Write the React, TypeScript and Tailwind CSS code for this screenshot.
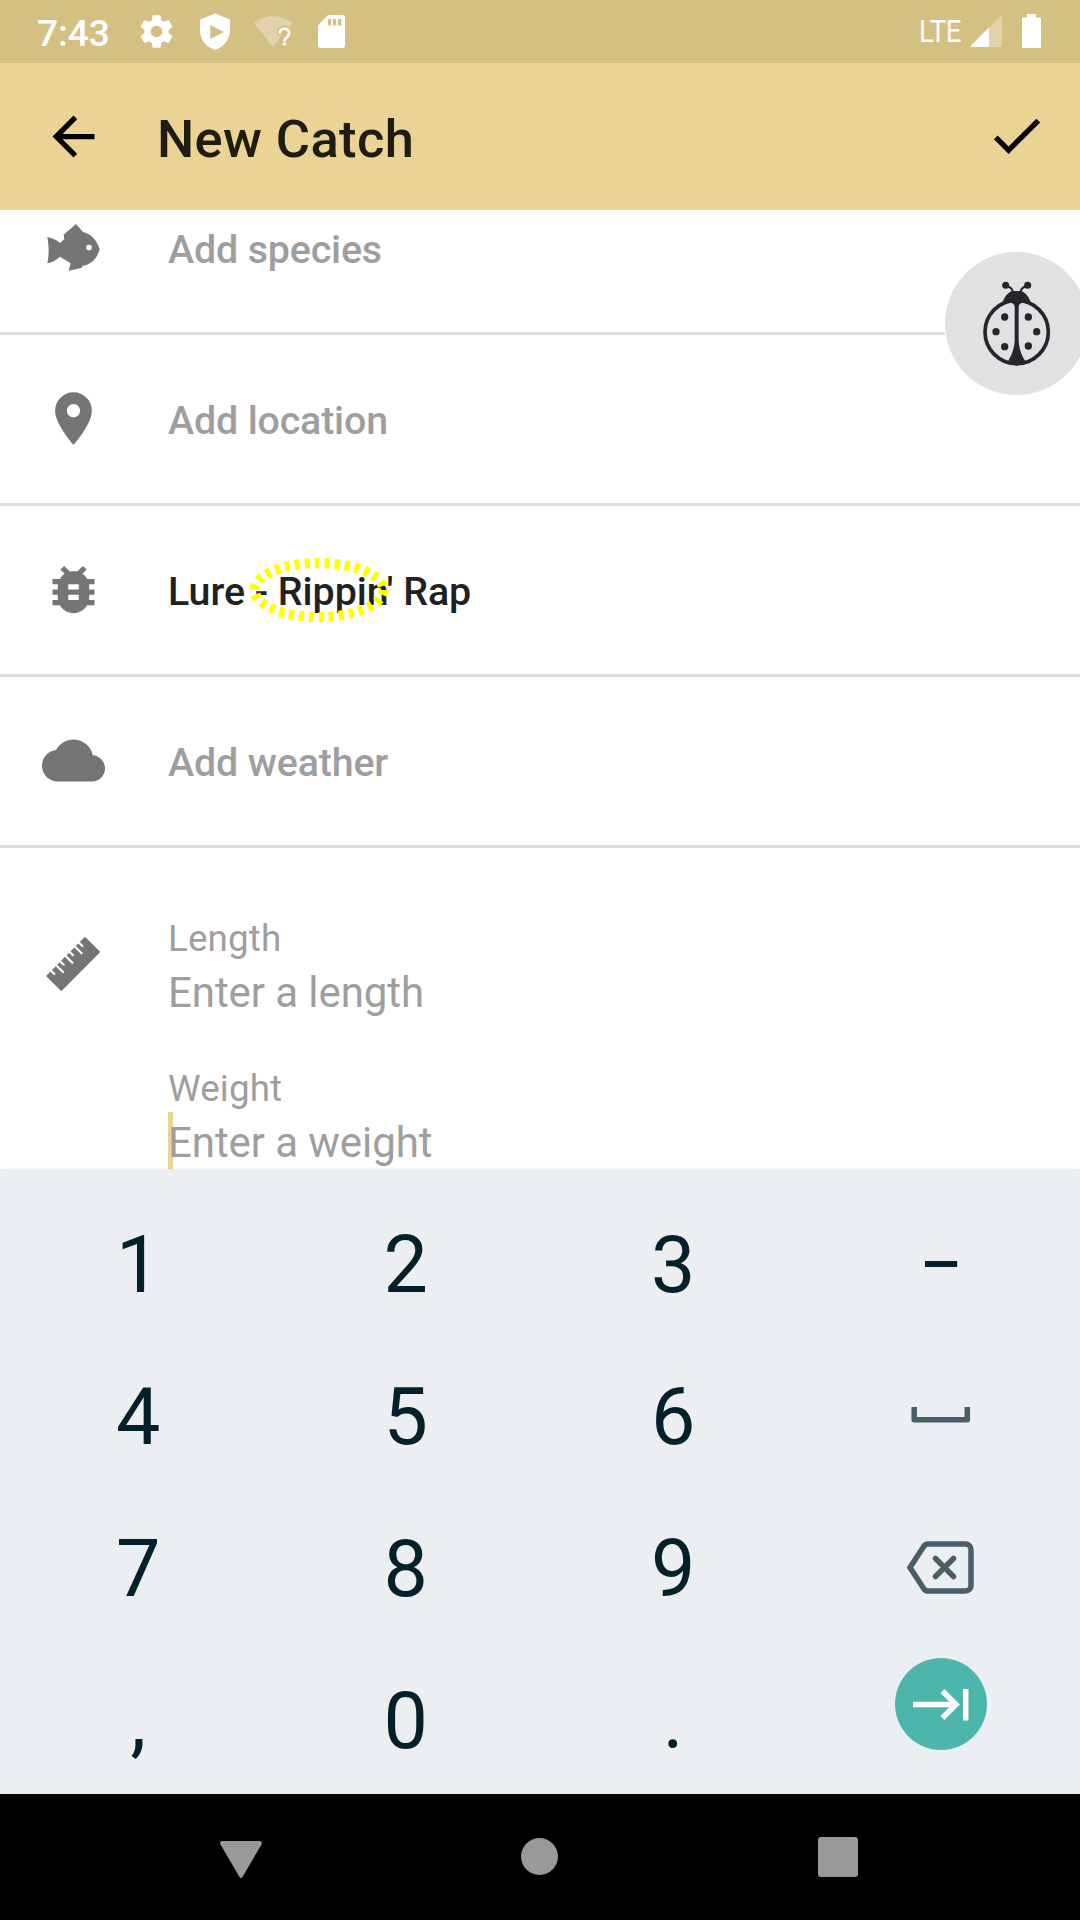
import type { ReactNode } from "react";

const ICON = "h-[63px] w-[63px] shrink-0";

function StatusBar() {
  return (
    <div className="flex h-[63px] items-start justify-between bg-[#d5c084] text-white">
      <div className="flex items-start pl-[37px]">
        <span className="mt-[10px] w-[100px] text-[37px] leading-[48px] font-medium">7:43</span>
        <svg className="mt-[12px] h-[39px] w-[39px]" viewBox="0 0 24 24" fill="currentColor">
          <path d="M19.43 12.98c.04-.32.07-.64.07-.98s-.03-.66-.07-.98l2.11-1.65c.19-.15.24-.42.12-.64l-2-3.46c-.12-.22-.39-.3-.61-.22l-2.49 1c-.52-.4-1.08-.73-1.69-.98l-.38-2.65C14.46 2.18 14.25 2 14 2h-4c-.25 0-.46.18-.49.42l-.38 2.65c-.61.25-1.17.59-1.69.98l-2.49-1c-.23-.09-.49 0-.61.22l-2 3.46c-.13.22-.07.49.12.64l2.11 1.65c-.04.32-.07.65-.07.98s.03.66.07.98l-2.11 1.65c-.19.15-.24.42-.12.64l2 3.46c.12.22.39.3.61.22l2.49-1c.52.4 1.08.73 1.69.98l.38 2.65c.03.24.24.42.49.42h4c.25 0 .46-.18.49-.42l.38-2.65c.61-.25 1.17-.59 1.69-.98l2.49 1c.23.09.49 0 .61-.22l2-3.46c.12-.22.07-.49-.12-.64l-2.11-1.65zM12 15.5c-1.93 0-3.5-1.57-3.5-3.5s1.57-3.5 3.5-3.5 3.5 1.57 3.5 3.5-1.57 3.5-3.5 3.5z" />
        </svg>
        <svg className="mt-[13px] ml-[24px] h-[37px] w-[30px]" viewBox="0 0 30 37" fill="currentColor" fillRule="evenodd">
          <path d="M15 .6 30 6.6V17c0 9.500-6.300 17.500-15 19.700C6.300 34.500 0 26.500 0 17V6.600zM10.300 12v14L24 19z" />
        </svg>
        <svg className="mt-[15px] ml-[24px] h-[34px] w-[40px]" viewBox="0 0 40 34" fill="currentColor">
          <path opacity=".3" d="M0 8.200C5 4 12 1.300 19 1.300S33 4 38.200 8.200l-2.600 3.500c-5-3-12-1-12.600 5.500v3h4.500L19 32z" />
          <path fill="none" stroke="currentColor" strokeWidth="2.800" d="M25.700 18.500c0-6.500 9.500-6.300 9.500-.5 0 4-4.800 4.300-4.800 8.500" />
          <circle cx="30.400" cy="29" r="1.800" />
        </svg>
        <svg className="mt-[15px] ml-[23.500px] h-[33px] w-[27px]" viewBox="0 0 27 33" fill="currentColor" fillRule="evenodd">
          <path d="M10 0h14a3 3 0 0 1 3 3v27a3 3 0 0 1-3 3H3a3 3 0 0 1-3-3V10.500zM10 4v6.500h3.300V4zm5 0v6.500h3.300V4zm5 0v6.500h3.300V4z" />
        </svg>
      </div>
      <div className="flex items-start pr-[39px]">
        <span className="mt-[10px] w-[52px] origin-left scale-x-[0.86] text-[32px] leading-[42px] tracking-[-0.5px]">LTE</span>
        <svg className="mt-[16px] h-[31px] w-[31px]" viewBox="0 0 31 31" fill="currentColor">
          <path opacity=".3" d="M0 29.500 29 .5q2-1 2 1.200V29a2 2 0 0 1-2 2H1q-1.500 0-1-1.500z" />
          <path d="M0 29.500 18 11.500V31H1q-1.500 0-1-1.500z" />
        </svg>
        <svg className="mt-[14px] ml-[20px] h-[34px] w-[19px]" viewBox="0 0 19 34" fill="currentColor">
          <path d="M5 0h9v3.500h3.500A1.500 1.500 0 0 1 19 5v27.500a1.500 1.500 0 0 1-1.500 1.500h-16A1.500 1.500 0 0 1 0 32.500V5a1.500 1.500 0 0 1 1.500-1.500H5z" />
        </svg>
      </div>
    </div>
  );
}

function AppBar() {
  return (
    <header className="flex h-[147px] items-center bg-[#ebd493] pr-[32px] pl-[42px]">
      <svg className={ICON} viewBox="0 0 24 24">
        <path d="M20 11H7.830l5.590-5.590L12 4l-8 8 8 8 1.410-1.410L7.830 13H20v-2z" />
      </svg>
      <h1 className="mt-[4px] ml-[52px] flex-1 text-[52.5px] leading-[62px] font-medium tracking-[0.35px] text-[#1f1c13]">New Catch</h1>
      <svg className={`${ICON} mb-[2px]`} viewBox="0 0 24 24">
        <path d="M9 16.170 4.830 12l-1.420 1.410L9 19 21 7l-1.410-1.410z" />
      </svg>
    </header>
  );
}

function Row({ icon, children, first, filled }: { icon: ReactNode; children: ReactNode; first?: boolean; filled?: boolean }) {
  return (
    <div className={`flex items-start border-b-[3px] border-[#dcdcdc] pl-[42px] ${first ? "h-[125px] pt-[6px]" : "h-[171px] pt-[52px]"}`}>
      {icon}
      <div
        className={`mt-[10px] ml-[63px] text-[39.375px] leading-[48px] font-medium ${filled ? "tracking-[-0.03px] text-[#212121]" : "tracking-[-0.150px] text-[#9e9e9e]"}`}
      >
        {children}
      </div>
    </div>
  );
}

function Glyph({ d }: { d: string }) {
  return (
    <svg className={ICON} viewBox="0 0 24 24" fill="#757575">
      <path d={d} />
    </svg>
  );
}

function Fish() {
  return (
    <svg className={ICON} viewBox="6 0 189 189" fill="#757575" fillRule="evenodd">
      <path d="M22 63q23 5 38 18l13-12-2-13 37-32 21 24c24 5 42 25 50 52-8 28-26 46-50 49l-6 7-37 8 6-22-32-20q-16 15-38 20 8-39 0-79zM147 86a8.500 8.500 0 1 0 0 17 8.500 8.500 0 0 0 0-17z" />
    </svg>
  );
}

function Ruler() {
  return (
    <svg className={`${ICON} mt-[84px]`} viewBox="6 6 189 189">
      <path fill="#757575" d="M135 20l46 46L64 184l-46-46z" />
      <path
        fill="none"
        stroke="#ffffff"
        strokeWidth="6.500"
        strokeLinecap="round"
        d="M31 120l12 12M47 104l22 22M59 92l12 12M75 76l22 22M87 64l12 12M103 48l22 22M115 36l12 12"
      />
    </svg>
  );
}

function Ellipse() {
  return (
    <svg className="absolute top-[-11px] left-[81px] h-[66px] w-[140px]" viewBox="0 0 140 66">
      <ellipse cx="70" cy="33" rx="64.500" ry="27" fill="none" stroke="#ffff00" strokeWidth="10" strokeDasharray="5 5" />
    </svg>
  );
}

function Ladybug() {
  return (
    <div className="absolute top-[252px] left-[945px] h-[143px] w-[143px] rounded-full bg-[#e0e1e3] shadow-[0_0_0_1px_#ffffff]">
      <svg className="h-[143px] w-[143px]" viewBox="75 66 429 429" fill="#242629">
        <circle cx="290" cy="306" r="95" fill="none" stroke="#242629" strokeWidth="11" />
        <path d="M246 222c6-20 16-33 30-39h28c14 6 24 19 30 39-16-7-36-6-38 8v98c0 20 6 45 20 66l-26 14-26-14c14-21 20-46 20-66v-98c-2-14-22-15-38-8z" />
        <path d="M261 169q15 3 18 18M319 169q-15 3-18 18" fill="none" stroke="#242629" strokeWidth="6" />
        <circle cx="257" cy="166" r="10.500" />
        <circle cx="323" cy="166" r="10.500" />
        <circle cx="254" cy="261" r="11" />
        <circle cx="325" cy="261" r="11" />
        <circle cx="228" cy="305" r="11" />
        <circle cx="350" cy="305" r="11" />
        <circle cx="254" cy="350" r="11" />
        <circle cx="325" cy="348" r="11" />
      </svg>
    </div>
  );
}

function Form() {
  return (
    <main className="h-[959px] overflow-hidden bg-white">
      <Row first icon={<Fish />}>
        Add species
      </Row>
      <Row icon={<Glyph d="M12 2C8.130 2 5 5.130 5 9c0 5.250 7 13 7 13s7-7.750 7-13c0-3.870-3.130-7-7-7zm0 9.500c-1.380 0-2.500-1.120-2.500-2.500s1.120-2.500 2.500-2.500 2.500 1.120 2.500 2.500-1.120 2.500-2.500 2.500z" />}>
        Add location
      </Row>
      <Row
        filled
        icon={<Glyph d="M20 8h-2.810c-.45-.78-1.070-1.450-1.820-1.960L17 4.410 15.590 3l-2.170 2.170C12.960 5.060 12.490 5 12 5c-.48 0-.96.06-1.410.17L8.410 3 7 4.410l1.620 1.630C7.880 6.550 7.260 7.220 6.810 8H4v2h2.090c-.05.33-.09.66-.09 1v1H4v2h2v1c0 .34.04.67.09 1H4v2h2.810c1.040 1.790 2.970 3 5.190 3s4.150-1.210 5.190-3H20v-2h-2.090c.05-.33.09-.66.09-1v-1h2v-2h-2v-1c0-.34-.04-.67-.09-1H20V8zm-6 8h-4v-2h4v2zm0-4h-4v-2h4v2z" />}
      >
        <div className="relative">
          Lure - Rippin' Rap
          <Ellipse />
        </div>
      </Row>
      <Row icon={<Glyph d="M19.350 10.040C18.670 6.590 15.640 4 12 4 9.110 4 6.600 5.640 5.350 8.040 2.340 8.360 0 10.910 0 14c0 3.310 2.690 6 6 6h13c2.760 0 5-2.240 5-5 0-2.640-2.050-4.780-4.650-4.960z" />}>
        Add weather
      </Row>
      <div className="flex items-start pl-[42px]">
        <Ruler />
        <div className="ml-[63px] pt-[69px] text-[#9e9e9e]">
          <div className="text-[36.750px] leading-[44px] tracking-[0.150px]">Length</div>
          <div className="mt-[6px] text-[42px] leading-[52px] tracking-[-0.080px]">Enter a length</div>
          <div className="mt-[48px] text-[36.750px] leading-[44px] tracking-[0.150px]">Weight</div>
          <div className="relative mt-[6px] text-[42px] leading-[52px] tracking-[-0.080px]">
            <span className="absolute top-[-5px] left-0 h-[60px] w-[5px] bg-[#ebd493]" />
            <span className="relative">Enter a weight</span>
          </div>
        </div>
      </div>
    </main>
  );
}

function Key({ children }: { children: ReactNode }) {
  return <div className="flex h-[152px] items-center justify-center pt-[2px] text-[79px] leading-[92px]">{children}</div>;
}

function IconKey({ children }: { children: ReactNode }) {
  return <div className="flex h-[152px] items-center justify-center pb-[2px]">{children}</div>;
}

function Keyboard() {
  return (
    <section className="relative grid h-[625px] grid-cols-4 content-start bg-[#ebeff2] pt-[19px] pr-[5.500px] pl-[4.500px] text-[#04202a] shadow-[0_1px_4px_rgba(0,0,0,0.12)]">
      <Key>1</Key>
      <Key>2</Key>
      <Key>3</Key>
      <Key>−</Key>
      <Key>4</Key>
      <Key>5</Key>
      <Key>6</Key>
      <IconKey>
        <svg className="ml-px h-[16px] w-[60px]" viewBox="0 0 60 16" fill="none" stroke="#4b5d66" strokeWidth="5.500" strokeLinejoin="round">
          <path d="M3.200 0v12.700h53.100V0" />
        </svg>
      </IconKey>
      <Key>7</Key>
      <Key>8</Key>
      <Key>9</Key>
      <IconKey>
        <svg className="h-[53px] w-[67px]" viewBox="0 0 67 53" fill="none" stroke="#4b5d66" strokeWidth="5.500">
          <path d="M21 3h37.500a5.500 5.500 0 0 1 5.500 5.500v36a5.500 5.500 0 0 1-5.500 5.500H21q-2.500 0-4-2L3 26.500 17 5q1.500-2 4-2z" />
          <path d="m28.500 17.500 18 18m0-18-18 18" strokeLinecap="round" />
        </svg>
      </IconKey>
      <Key>,</Key>
      <Key>0</Key>
      <Key>.</Key>
      <div className="flex h-[152px] items-start justify-center pt-[14px]">
        <svg className="h-[92px] w-[92px]" viewBox="0 0 92 92" fill="none" stroke="#ffffff" strokeWidth="5.500">
          <circle cx="46" cy="46" r="46" fill="#4db6ac" stroke="none" />
          <path d="M18 46.500h43M47.500 33 61 46.500 47.500 60M70.700 31v31.500" />
        </svg>
      </div>
    </section>
  );
}

function NavBar() {
  return (
    <nav className="flex h-[126px] items-start bg-black pt-[43px] text-[#999999]">
      <svg className="mt-[4px] ml-[220px] h-[37px] w-[42px]" viewBox="0 0 42 37" fill="currentColor">
        <path d="M2.500 0h37q3.500.3 2 3.500L22.500 36q-1.500 2-3 0L.5 3.500Q-1 .3 2.500 0z" />
      </svg>
      <div className="mt-[1px] ml-[259px] h-[37px] w-[37px] rounded-full bg-current" />
      <div className="ml-[260px] h-[40px] w-[40px] rounded-[3px] bg-current" />
    </nav>
  );
}

export default function App() {
  return (
    <div className="relative flex h-[1920px] w-[1080px] flex-col overflow-hidden bg-white font-[Roboto,sans-serif]">
      <StatusBar />
      <AppBar />
      <Form />
      <Keyboard />
      <NavBar />
      <Ladybug />
    </div>
  );
}
